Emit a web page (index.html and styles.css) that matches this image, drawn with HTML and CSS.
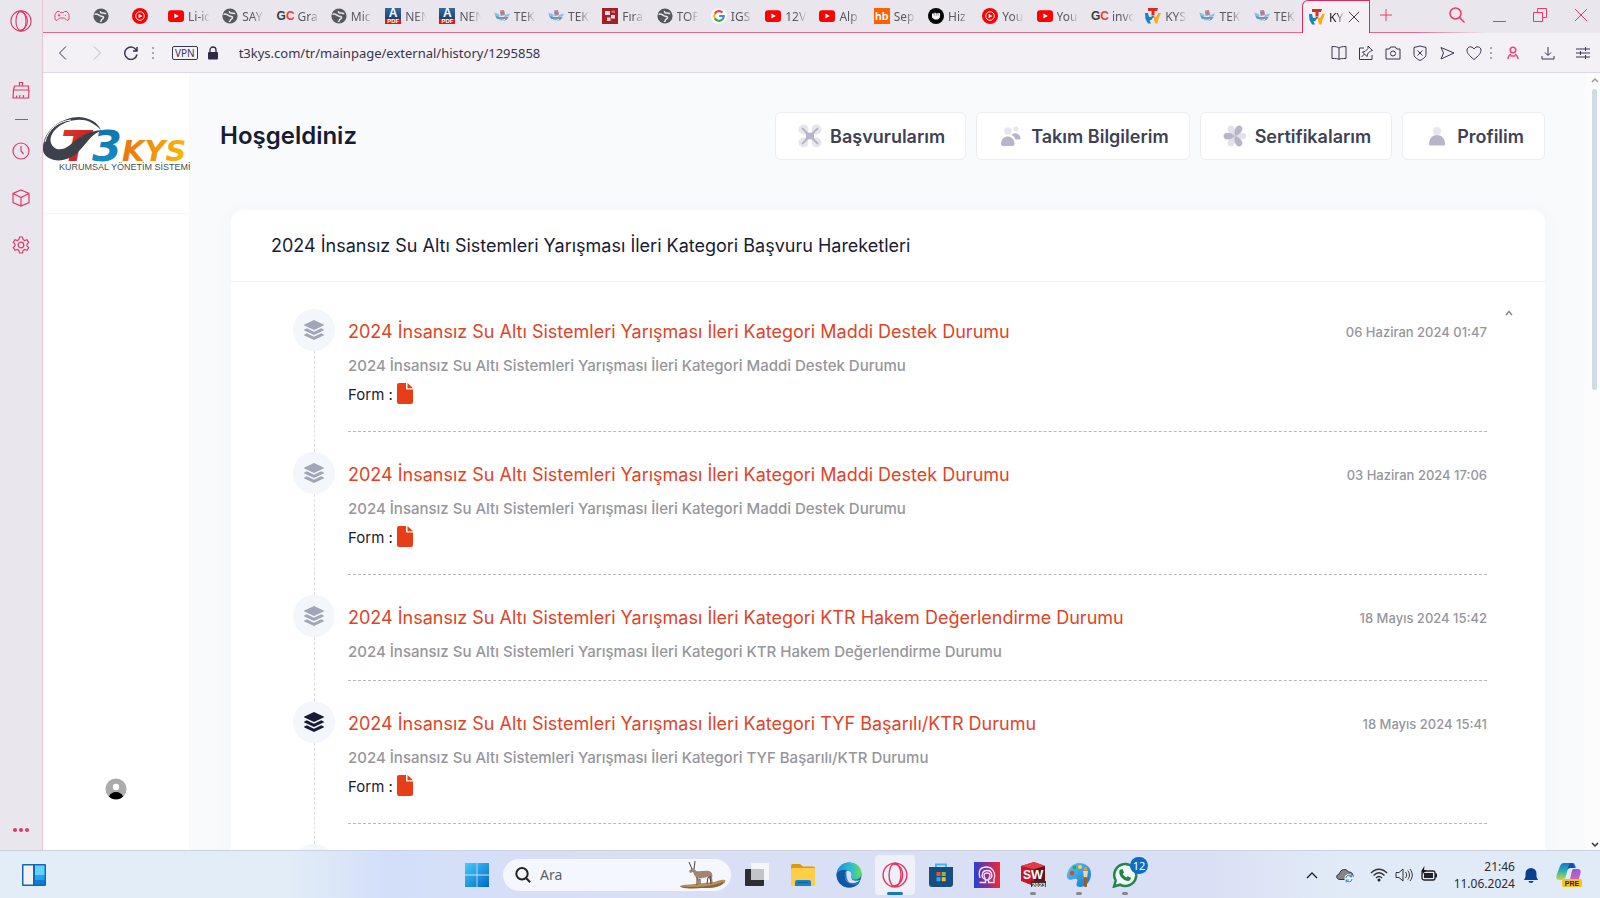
FILE: index.html
```html
<!DOCTYPE html>
<html lang="tr">
<head>
<meta charset="utf-8">
<meta name="viewport" content="width=device-width, initial-scale=1">
<title>KYS</title>
<link rel="stylesheet" href="styles.css">
</head>
<body>
<svg class="sprite" aria-hidden="true">
  <defs>
    <linearGradient id="g-red" x1="0" y1="0" x2="1" y2="1"><stop offset="0" stop-color="#e2382a"/><stop offset="1" stop-color="#b51a20"/></linearGradient>
    <linearGradient id="g-blue" x1="0" y1="0" x2="0" y2="1"><stop offset="0" stop-color="#0a6fae"/><stop offset="1" stop-color="#1593c9"/></linearGradient>
    <linearGradient id="g-kys" x1="0" y1="0" x2="1" y2="0"><stop offset="0" stop-color="#e87510"/><stop offset="1" stop-color="#f9b90c"/></linearGradient>
    <linearGradient id="g-win" x1="0" y1="0" x2="1" y2="1"><stop offset="0" stop-color="#46cdf8"/><stop offset="1" stop-color="#0067c8"/></linearGradient>
    <linearGradient id="g-edge" x1="0" y1="0" x2="1" y2="0"><stop offset="0" stop-color="#1b8fdb"/><stop offset=".6" stop-color="#2cc0cf"/><stop offset="1" stop-color="#69dc58"/></linearGradient>
    <linearGradient id="g-app" x1="0" y1="0" x2="1" y2="0"><stop offset="0" stop-color="#2a3ed0"/><stop offset=".5" stop-color="#8b2f93"/><stop offset="1" stop-color="#f5282f"/></linearGradient>
    <linearGradient id="g-paint" x1="0" y1="0" x2="1" y2="1"><stop offset="0" stop-color="#5ccbf5"/><stop offset="1" stop-color="#1673c4"/></linearGradient>
    <linearGradient id="g-cop1" x1="0" y1="0" x2="0" y2="1"><stop offset="0" stop-color="#1576d8"/><stop offset=".5" stop-color="#2cb7a5"/><stop offset="1" stop-color="#d7d23a"/></linearGradient>
    <linearGradient id="g-cop2" x1="0" y1="0" x2="0" y2="1"><stop offset="0" stop-color="#8f5be8"/><stop offset="1" stop-color="#f0609a"/></linearGradient>
  </defs>
  <symbol id="globe" viewBox="0 0 16 16"><circle cx="8" cy="8" r="7.6" fill="#55585c"/><path d="M1.500 6.500C4 4.500 5.500 7.500 7.500 8c2 .4 3.200.2 3 1.700-.2 1.300-2 1-2.200 2.800-.1 1-.8 1-1.300.6M7.500 3c-.4 1.800 1 2.300 2.300 2 1.200-.2 1.700.8 3.500.6" fill="none" stroke="#e9e6ee" stroke-width="1.500"/></symbol>
  <symbol id="ytm" viewBox="0 0 16 16"><circle cx="8" cy="8" r="8" fill="#f00"/><circle cx="8" cy="8" r="4.300" fill="none" stroke="#fff"/><path d="M6.600 5.700 10.400 8l-3.800 2.300z" fill="#fff"/></symbol>
  <symbol id="yt" viewBox="0 0 16 16"><rect y="2.300" width="16" height="11.600" rx="3" fill="#f00"/><path d="M6.400 5.500 10.800 8l-4.400 2.500z" fill="#fff"/></symbol>
  <symbol id="tek" viewBox="0 0 16 16"><path d="M1 6.500c2 .5 3 1 4 2.500h9.500c-1 3.500-5 4.500-8.500 3.500C3 11.500 1.500 9.500 1 6.500z" fill="#5aa9d6"/><path d="M0 4.500 4.500 6 6 8.500 2 8zM16 5.500 11 7 10 9l4.500-.5z" fill="#86bfe0"/><path d="M6 2.500 10 2l1 5-4.500 1z" fill="#a08ea6"/><path d="M2.500 9.500 13 10M6.500 5h4" stroke="#e2655c" stroke-width="1.200"/><path d="M4 11.500c2 1 5 1 7 0" stroke="#eef5fa" fill="none"/></symbol>
  <symbol id="fira" viewBox="0 0 16 16"><rect width="16" height="16" fill="#a52026"/><path d="M3 3h5v4H3zM9 7h4v3.500H9zM5 9.500h3.500V13H5z" fill="#f5dedd"/><path d="M9.500 2.500H13V5H9.500z" fill="#cf6a6c"/></symbol>
  <symbol id="google" viewBox="0 0 16 16"><circle cx="8" cy="8" r="8" fill="#fff"/><g fill="none" stroke-width="2.200"><path d="M11.500 4.600A4.800 4.800 0 0 0 3.900 5.600" stroke="#ea4335"/><path d="M3.900 5.600a4.800 4.800 0 0 0 0 4.800" stroke="#fbbc05"/><path d="M3.900 10.400a4.800 4.800 0 0 0 7.300 1.200" stroke="#34a853"/><path d="M11.200 11.600C12.400 10.600 12.900 9.500 12.800 8H8.200" stroke="#4285f4"/></g></symbol>
  <symbol id="fist" viewBox="0 0 16 16"><circle cx="8" cy="8" r="8" fill="#050505"/><path d="M4 5.500h2l.4-.7h1.400l.5.500h1.400l.4-.3h1.500l.5 1-.2 3.500-2 2H6.500L4 9.500z" fill="#f2f2f2"/><path d="M6.300 5v2.700M8.300 5v2.700M10.200 5v2.700" stroke="#444" stroke-width=".5"/></symbol>
  <symbol id="kys" viewBox="0 0 16 16"><path d="M3 0h10l-1 3h-2.500v4.500h-3V3H3z" fill="#d92b22"/><path d="M0 5h3l1 4 4-.5-1 3-2.500 1 1.500 3H3L.5 11z" fill="#1685bd"/><path d="M16 5h-2.500l-2.500 4-2-.3v3l1.300 3.800h2.200l.5-3.500z" fill="#f7ad16"/><path d="M6.500 8 9.500 8.500 8 10z" fill="#4b4650"/></symbol>
  <symbol id="pad" viewBox="0 0 16 16"><path d="M3 3.500h2.500l1 1h3l1-1H13l2 3v5l-2 1-2.500-2.500h-5L3 12.500l-2-1v-5z"/><path d="M5 6v2.500M3.800 7.300h2.500M11 7.300h1M9.500 7.300h.3"/></symbol>
  <symbol id="opera" viewBox="0 0 24 24"><circle cx="12" cy="12" r="11"/><ellipse cx="12" cy="12" rx="5.500" ry="10.800"/><path d="M9 2C15 1 19 6 19 12S15 23 9 22"/></symbol>
  <symbol id="brush" viewBox="0 0 18 18"><path d="M7.500 5V1.500h3V5M2.500 5h14v4H1.500zM1.500 9 1 17h15.500L17 9M7.500 17l.5-3M11.500 17v-3M4 17l1-2.500"/></symbol>
  <symbol id="clock" viewBox="0 0 18 18"><circle cx="9" cy="9" r="8"/><path d="M9 4v5l2.500 3"/></symbol>
  <symbol id="cube" viewBox="0 0 18 18"><path d="M9 1l8 3.500v9L9 17l-8-3.500v-9zM1 4.500 9 8.500l8-4M9 8.500V17"/></symbol>
  <symbol id="gear" viewBox="0 0 18 18"><circle cx="9" cy="9" r="2.800"/><path d="M7 3.500 7.500 1h3l.5 2.500 1.500 1L15 3.700l1.700 2.700L15 8.200v1.600l1.700 1.800L15 14.300l-2.500-.8-1.500 1-.5 2.500h-3L7 14.500l-1.500-1-2.500.8-1.700-2.700L3 9.800V8.200L1.300 6.400 3 3.700l2.500.8z"/></symbol>
  <symbol id="x" viewBox="0 0 14 14"><path d="M1 1l12 12M13 1 1 13"/></symbol>
  <symbol id="layers" viewBox="0 0 20 20"><path d="M10 0l9.600 4.600c.5.300.5.700 0 1L10 10 .4 5.600c-.5-.3-.5-.7 0-1z"/><path d="M2.800 8.300.4 9.500c-.5.300-.5.700 0 1L10 15l9.600-4.500c.5-.3.5-.7 0-1l-2.400-1.200L10 11.700z"/><path d="M2.800 13.300.4 14.500c-.5.300-.5.700 0 1L10 20l9.600-4.500c.5-.3.500-.7 0-1l-2.400-1.200-7.200 3.400z"/></symbol>
  <symbol id="doc" viewBox="0 0 16 21"><path d="M2 0h7v5.500c0 .6.400 1 1 1h6V19a2 2 0 0 1-2 2H2a2 2 0 0 1-2-2V2a2 2 0 0 1 2-2z"/><path d="M10.500 0 16 5.200h-5.500z"/></symbol>
</svg>

<div class="desktop">
  <div class="browser">
    <aside class="dock">
      <button class="ico-btn dock-opera" aria-label="Opera"><svg class="i22 line"><use href="#opera"/></svg></button>
      <div class="dock-list">
        <button class="ico-btn" aria-label="Temizle"><svg class="i18 line"><use href="#brush"/></svg></button>
        <span class="dock-rule"></span>
        <button class="ico-btn" aria-label="Geçmiş"><svg class="i18 line"><use href="#clock"/></svg></button>
        <button class="ico-btn" aria-label="Uzantılar"><svg class="i18 line"><use href="#cube"/></svg></button>
        <button class="ico-btn" aria-label="Ayarlar"><svg class="i18 line"><use href="#gear"/></svg></button>
      </div>
      <button class="ico-btn dock-more" aria-label="Diğer"><svg class="i18" viewBox="0 0 18 18"><circle cx="3" cy="9" r="2"/><circle cx="9" cy="9" r="2"/><circle cx="15" cy="9" r="2"/></svg></button>
    </aside>

    <div class="window">
      <div class="tabbar">
        <div class="pins">
          <button class="ico-btn pink" aria-label="GX"><svg class="i16 line"><use href="#pad"/></svg></button>
          <button class="ico-btn" aria-label="Site"><svg class="i16"><use href="#globe"/></svg></button>
          <button class="ico-btn" aria-label="YouTube Music"><svg class="i16"><use href="#ytm"/></svg></button>
        </div>
        <nav class="tabs">
          <button class="tab"><svg class="i16"><use href="#yt"/></svg><span class="name">Li-ic</span></button>
          <button class="tab"><svg class="i16"><use href="#globe"/></svg><span class="name">SAY</span></button>
          <button class="tab"><b class="gc">G<i>C</i></b><span class="name">Gra</span></button>
          <button class="tab"><svg class="i16"><use href="#globe"/></svg><span class="name">Mic</span></button>
          <button class="tab"><b class="pdf">A<i>PDF</i></b><span class="name">NEN</span></button>
          <button class="tab"><b class="pdf">A<i>PDF</i></b><span class="name">NEN</span></button>
          <button class="tab"><svg class="i16"><use href="#tek"/></svg><span class="name">TEK</span></button>
          <button class="tab"><svg class="i16"><use href="#tek"/></svg><span class="name">TEK</span></button>
          <button class="tab"><svg class="i16"><use href="#fira"/></svg><span class="name">Fıra</span></button>
          <button class="tab"><svg class="i16"><use href="#globe"/></svg><span class="name">TOF</span></button>
          <button class="tab"><svg class="i16"><use href="#google"/></svg><span class="name">IGS</span></button>
          <button class="tab"><svg class="i16"><use href="#yt"/></svg><span class="name">12V</span></button>
          <button class="tab"><svg class="i16"><use href="#yt"/></svg><span class="name">Alp</span></button>
          <button class="tab"><b class="hb">hb</b><span class="name">Sep</span></button>
          <button class="tab"><svg class="i16"><use href="#fist"/></svg><span class="name">Hiz</span></button>
          <button class="tab"><svg class="i16"><use href="#ytm"/></svg><span class="name">You</span></button>
          <button class="tab"><svg class="i16"><use href="#yt"/></svg><span class="name">You</span></button>
          <button class="tab"><b class="gc">G<i>C</i></b><span class="name">invo</span></button>
          <button class="tab"><svg class="i16"><use href="#kys"/></svg><span class="name">KYS</span></button>
          <button class="tab"><svg class="i16"><use href="#tek"/></svg><span class="name">TEK</span></button>
          <button class="tab"><svg class="i16"><use href="#tek"/></svg><span class="name">TEK</span></button>
        </nav>
        <div class="tab-active"><svg class="i16"><use href="#kys"/></svg><span class="name">KY</span><button class="ico-btn" aria-label="Sekmeyi kapat"><svg class="i12 line"><use href="#x"/></svg></button></div>
        <div class="controls">
          <button class="ico-btn" aria-label="Yeni sekme"><svg class="i14 line" viewBox="0 0 14 14"><path d="M7 1v12M1 7h12"/></svg></button>
          <div class="win-controls">
            <button class="ico-btn" aria-label="Ara"><svg class="i16 line mid" viewBox="0 0 16 16"><circle cx="6.500" cy="6.500" r="5.500"/><path d="M10.500 10.500 15.500 15.500"/></svg></button>
            <button class="ico-btn" aria-label="Küçült"><svg class="i14 line" viewBox="0 0 14 14"><path d="M1 13.500h13"/></svg></button>
            <button class="ico-btn" aria-label="Geri yükle"><svg class="i14 line" viewBox="0 0 14 14"><path d="M.5 4.500h9v9h-9zM4.500 4.500v-4h9v9h-4"/></svg></button>
            <button class="ico-btn" aria-label="Kapat"><svg class="i14 line"><use href="#x"/></svg></button>
          </div>
        </div>
      </div>

      <div class="addressbar">
        <div class="nav-btns">
          <button class="ico-btn" aria-label="Geri"><svg class="i14 line" viewBox="0 0 14 14"><path d="M10 .5 3.500 7l6.500 6.500"/></svg></button>
          <button class="ico-btn dim" aria-label="İleri"><svg class="i14 line" viewBox="0 0 14 14"><path d="M4 .5 10.500 7 4 13.500"/></svg></button>
          <button class="ico-btn" aria-label="Yenile"><svg class="i14 line mid" viewBox="0 0 14 14"><path d="M12.500 4.500A6.200 6.200 0 1 0 13 8.500M13 1v4H9"/></svg></button>
        </div>
        <span class="vdots"></span>
        <span class="vpn">VPN</span>
        <svg class="lock" viewBox="0 0 12 14"><rect x="1" y="6" width="10" height="7.500" rx="1" fill="#2f2a44"/><path d="M3 6V4a3 3 0 0 1 6 0v2" fill="none" stroke="#2f2a44" stroke-width="1.300"/></svg>
        <input class="url" type="text" aria-label="Adres" value="t3kys.com/tr/mainpage/external/history/1295858">
        <div class="tools">
          <button class="ico-btn" aria-label="Okuyucu"><svg class="i16 line" viewBox="0 0 16 16"><path d="M8 3C7 2 5 1.500 1 1.500v12c4 0 6 0 7 1 1-1 3-1 7-1v-12c-4 0-6 .5-7 1.500zM8 3v11.500"/></svg></button>
          <button class="ico-btn" aria-label="Sabitle"><svg class="i16 line" viewBox="0 0 16 16"><path d="M6 3H1.500v11.500H14V10M10 1l4.500 4.500-2 .5-3 3-.5 2.500L4.500 7l2.500-.5 3-3zM6.500 9 3.500 12"/></svg></button>
          <button class="ico-btn" aria-label="Anlık görüntü"><svg class="i16 line" viewBox="0 0 16 16"><path d="M1 4h3.500l1-2h5l1 2H15v10H1z"/><circle cx="8" cy="8.500" r="2.500"/></svg></button>
          <button class="ico-btn" aria-label="Engelleyici"><svg class="i16 line" viewBox="0 0 16 16"><path d="M8 1l6 1.500v7c0 2.500-3 4.500-6 6-3-1.500-6-3.500-6-6v-7zM5.500 5.500l5 5M10.500 5.500l-5 5"/></svg></button>
          <button class="ico-btn" aria-label="Gönder"><svg class="i16 line" viewBox="0 0 16 16"><path d="M2 2.500 15 8 2 14l2.500-6z"/></svg></button>
          <button class="ico-btn" aria-label="Favori"><svg class="i16 line" viewBox="0 0 16 16"><path d="M8 14.500C3 10.500 1 8 1 5.200 1 1.500 6 .5 8 4c2-3.500 7-2.500 7 1.200C15 8 13 10.500 8 14.500z"/></svg></button>
        </div>
        <span class="vdots"></span>
        <div class="tools-end">
          <button class="ico-btn pink" aria-label="Profil"><svg class="i14 line mid" viewBox="0 0 14 14"><circle cx="7" cy="4" r="2.800"/><path d="M2 13c0-2.500 1.500-4 3-5M12 13c0-2.500-1.500-4-3-5M4.500 10h5"/></svg></button>
          <button class="ico-btn" aria-label="İndirilenler"><svg class="i14 line" viewBox="0 0 14 14"><path d="M7 1v8M4 6.500 7 9.500l3-3M1 10v3h12v-3"/></svg></button>
          <button class="ico-btn" aria-label="Kolay kurulum"><svg class="i14 line" viewBox="0 0 14 14"><path d="M0 3h14M0 7h14M0 11h14M9.500 1v4M4.500 5v4M9.500 9v4"/></svg></button>
        </div>
      </div>

      <div class="viewport">
        <aside class="site-side">
          <a class="logo" href="#" aria-label="T3 KYS Kurumsal Yönetim Sistemi">
            <svg viewBox="0 0 148 56">
              <text x="18" y="44" class="lg-big" fill="url(#g-red)">T</text>
              <path d="M0 32C0 12 20 0 36 0c12 1 19 6 22 13C50 5 42 2 34 3 18 4 5 16 8 26c3 8 12 8 19 2 9-8 17-14 33-15-12 4-16 13-24 21-8 9-22 12-30 7-5-3-6-6-6-9z" fill="#3d414b"/>
              <path d="M2 25C5 12 16 4 28 3" fill="none" stroke="#fff"/>
              <text x="49" y="44" class="lg-big" fill="url(#g-blue)">3</text>
              <text x="79" y="44" class="lg-kys" fill="url(#g-kys)">KYS</text>
              <text x="16" y="53" class="lg-sub" fill="#4a4d55">KURUMSAL YÖNETİM SİSTEMİ</text>
            </svg>
          </a>
          <button class="ico-btn avatar" aria-label="Hesap"><svg class="i22" viewBox="0 0 22 22"><circle cx="11" cy="11" r="10.500" fill="#ababab"/><path d="M4 18.500C6 12.500 16 12.500 18 18.500 14.500 22.300 7.500 22.300 4 18.500z" fill="#000"/><circle cx="11" cy="9" r="3.200" fill="#fff"/></svg></button>
        </aside>

        <main class="site">
          <header class="site-head">
            <h1>Hoşgeldiniz</h1>
            <nav class="menu">
              <a href="#" class="menu-item"><svg viewBox="0 0 24 24"><g fill="#e7e6ee"><circle cx="5.500" cy="5.500" r="5"/><circle cx="18.500" cy="5.500" r="5"/><circle cx="5.500" cy="18.500" r="5"/><circle cx="18.500" cy="18.500" r="5"/></g><path d="M4 4l16 16M20 4 4 20" stroke="#b7b5c9" stroke-width="2"/><path d="M7 8c3 1 7 1 10 0-1.500 3-1.500 5 0 8-3-1-7-1-10 0 1.500-3 1.500-5 0-8z" fill="#b7b5c9"/></svg>Başvurularım</a>
              <a href="#" class="menu-item"><svg viewBox="0 0 24 24"><circle cx="9" cy="7" r="3.700" fill="#e7e6ee"/><circle cx="17" cy="5" r="2.500" fill="#e7e6ee"/><path d="M2 20c0-10 13.500-10 13.500 0 0 1.300-.6 2-2 2H4c-1.300 0-2-.7-2-2zM12.500 11c3-3.500 9-1 9 3 0 1-.5 1.500-1.500 1.500h-3.500C16 13.500 14.500 12 12.500 11z" fill="#b7b5c9"/></svg>Takım Bilgilerim</a>
              <a href="#" class="menu-item"><svg viewBox="0 0 24 24"><defs><path id="petal" d="M12 12C8 16.500.5 16.500.5 12S8 7.500 12 12z"/></defs><g fill="#e3e2eb"><use href="#petal" transform="rotate(60 12 12)"/><use href="#petal" transform="rotate(180 12 12)"/><use href="#petal" transform="rotate(300 12 12)"/></g><g fill="#b7b5c9"><use href="#petal"/><use href="#petal" transform="rotate(120 12 12)"/><use href="#petal" transform="rotate(240 12 12)"/></g></svg>Sertifikalarım</a>
              <a href="#" class="menu-item"><svg viewBox="0 0 24 24"><circle cx="12" cy="7" r="4" fill="#e7e6ee"/><path d="M4 20c0-12 16-12 16 0 0 1-.5 1.500-1.500 1.500h-13C4.500 21.500 4 21 4 20z" fill="#b7b5c9"/></svg>Profilim</a>
            </nav>
          </header>

          <section class="card">
            <h2 class="card-head">2024 İnsansız Su Altı Sistemleri Yarışması İleri Kategori Başvuru Hareketleri</h2>
            <div class="card-body">
              <ol class="timeline">
                <li class="entry">
                  <span class="badge"><svg><use href="#layers"/></svg></span>
                  <div class="entry-main">
                    <div class="entry-top"><h3>2024 İnsansız Su Altı Sistemleri Yarışması İleri Kategori Maddi Destek Durumu</h3><time>06 Haziran 2024 01:47</time></div>
                    <p class="desc">2024 İnsansız Su Altı Sistemleri Yarışması İleri Kategori Maddi Destek Durumu</p>
                    <p class="form">Form : <a href="#" aria-label="Form dosyası"><svg><use href="#doc"/></svg></a></p>
                  </div>
                </li>
                <li class="entry">
                  <span class="badge"><svg><use href="#layers"/></svg></span>
                  <div class="entry-main">
                    <div class="entry-top"><h3>2024 İnsansız Su Altı Sistemleri Yarışması İleri Kategori Maddi Destek Durumu</h3><time>03 Haziran 2024 17:06</time></div>
                    <p class="desc">2024 İnsansız Su Altı Sistemleri Yarışması İleri Kategori Maddi Destek Durumu</p>
                    <p class="form">Form : <a href="#" aria-label="Form dosyası"><svg><use href="#doc"/></svg></a></p>
                  </div>
                </li>
                <li class="entry">
                  <span class="badge"><svg><use href="#layers"/></svg></span>
                  <div class="entry-main">
                    <div class="entry-top"><h3>2024 İnsansız Su Altı Sistemleri Yarışması İleri Kategori KTR Hakem Değerlendirme Durumu</h3><time>18 Mayıs 2024 15:42</time></div>
                    <p class="desc">2024 İnsansız Su Altı Sistemleri Yarışması İleri Kategori KTR Hakem Değerlendirme Durumu</p>
                  </div>
                </li>
                <li class="entry">
                  <span class="badge dark"><svg><use href="#layers"/></svg></span>
                  <div class="entry-main">
                    <div class="entry-top"><h3>2024 İnsansız Su Altı Sistemleri Yarışması İleri Kategori TYF Başarılı/KTR Durumu</h3><time>18 Mayıs 2024 15:41</time></div>
                    <p class="desc">2024 İnsansız Su Altı Sistemleri Yarışması İleri Kategori TYF Başarılı/KTR Durumu</p>
                    <p class="form">Form : <a href="#" aria-label="Form dosyası"><svg><use href="#doc"/></svg></a></p>
                  </div>
                </li>
                <li class="entry"><span class="badge"></span></li>
              </ol>
              <button class="ico-btn list-up" aria-label="Yukarı"><svg viewBox="0 0 8 6"><path d="M1 5l3-3.500L7 5"/></svg></button>
            </div>
          </section>
        </main>

        <div class="scroll">
          <svg viewBox="0 0 8 6"><path d="M1 5l3-3 3 3" stroke="#999"/></svg>
          <span class="thumb"></span>
          <svg class="down" viewBox="0 0 8 6"><path d="M1 1l3 3 3-3" stroke="#333"/></svg>
        </div>
      </div>
    </div>
  </div>

  <footer class="taskbar">
    <div class="tb-left">
      <button class="ico-btn" aria-label="Pencere öğeleri"><svg class="i26" viewBox="0 0 26 26"><rect x="1" y="2" width="24" height="22" rx="1" fill="#1567ae"/><rect x="2.500" y="3.500" width="9.500" height="19" fill="#f1f2f4"/><rect x="14" y="3.500" width="9.500" height="19" fill="#0b7fd6"/><rect x="14" y="3.500" width="9.500" height="10" fill="#63d2fb"/><rect x="14" y="13.500" width="9.500" height="4.500" fill="#21a3ee"/></svg></button>
    </div>
    <div class="tb-mid">
      <button class="ico-btn" aria-label="Başlat"><svg class="i26" viewBox="0 0 26 26"><path d="M1 1h11.600v11.600H1zM13.400 1H25v11.600H13.400zM1 13.400h11.600V25H1zM13.400 13.400H25V25H13.400z" fill="url(#g-win)"/></svg></button>
      <label class="search">
        <svg class="i16" viewBox="0 0 16 16"><circle cx="7" cy="6.700" r="5.700"/><path d="M11 11l4.200 4.200"/></svg>
        <input type="text" placeholder="Ara" aria-label="Ara">
        <svg class="oryx" viewBox="0 0 48 28"><path d="M1 25c4-2 10-1 14-2 8-1 14-1 20-2 4-1 8-3 11-2 1 1 0 3-2 4-4 4-14 4-22 4-8 1-19 1-21-2z" fill="#b3905c"/><path d="M1 25c9 2 22 1 34-1 4-1 8-3 10-3-3 5-12 6-21 6S3 28 1 25z" fill="#86643a"/><path d="M12 8c2-1 4 0 5 2 4 1 9-1 13 0 3 1 4 4 3 7l1 6h-1l-3-6-9 0-1 6h-1l-1-6c-3-2-3-4-4-6l-3 1-1-2z" fill="#a18472"/><path d="M13 8 10 1M15 8l1-8M18 16v8M21 16v7M31 15l1 8M29 16l-1 7" stroke="#51413b" fill="none"/><path d="M19 17c4 1 7 0 10-1" stroke="#eee1d4" fill="none"/></svg>
      </label>
      <button class="ico-btn" aria-label="Görev görünümü"><svg class="i26" viewBox="0 0 26 26"><rect x="1" y="7" width="19" height="17" rx="1" fill="#2d2e31"/><rect x="7" y="1" width="18" height="17" rx="1" fill="#f6f6f8"/><rect x="7" y="7" width="13" height="11" fill="#c3c4c8"/></svg></button>
      <button class="ico-btn" aria-label="Dosya Gezgini"><svg class="i26" viewBox="0 0 26 26"><path d="M1 4a2 2 0 0 1 2-2h7l3 2.500h10a2 2 0 0 1 2 2V10H1z" fill="#dc9a10"/><rect x="1" y="6" width="24" height="18" rx="1.500" fill="#ffce47"/><path d="M5 24v-4a2 2 0 0 1 2-2h12a2 2 0 0 1 2 2v4z" fill="#1a80cc"/><path d="M8 20.500h10" stroke="#0a5b9c"/></svg></button>
      <button class="ico-btn" aria-label="Edge"><svg class="i26" viewBox="0 0 26 26"><circle cx="13" cy="13" r="12.500" fill="#1269bb"/><path d="M.6 12C2 4 8 .5 13.500.5c7 0 12 5 12 10.500 0 5-4 7-8 6.500-2 0-3-1-2.500-2.500 2-4-1-7-4.500-7C6 8 2 9 .6 12z" fill="url(#g-edge)"/><path d="M10.500 9C8 12 8 19 13 22c4 2 8 1 10.500-2-2 4-6 5.500-10.500 5.500C5 25.500.5 19 .6 12 3 8 8 7 10.500 9z" fill="#0e58a6"/><path d="M15 15c2-4-1.500-7-4.500-6-3 3-2 11 4 12 4 .6 8-1 9.500-3-3 1.500-9 1-9-3z" fill="#d9dff4"/><path d="M10.500 9C7 13 9 19.500 14.500 21c3.500 1 7 .2 9.500-2-1 2-2 3-3 4-6 1-12-4-10.500-14z" fill="#1874c7"/></svg></button>
      <button class="ico-btn on" aria-label="Opera"><svg class="i26 line rose"><use href="#opera"/></svg></button>
      <button class="ico-btn" aria-label="Store"><svg class="i26" viewBox="0 0 26 26"><path d="M8 7V2.500h10V7" fill="none" stroke="#3dbdf2" stroke-width="2"/><path d="M1 5h24v17a3 3 0 0 1-3 3H4a3 3 0 0 1-3-3z" fill="#164d82"/><path d="M8.500 10h4v4h-4z" fill="#f1502f"/><path d="M13.700 10h4v4h-4z" fill="#80c041"/><path d="M8.500 15.200h4v4h-4z" fill="#2ca8ec"/><path d="M13.700 15.200h4v4h-4z" fill="#fdbb16"/></svg></button>
      <button class="ico-btn" aria-label="Uygulama"><svg class="i26" viewBox="0 0 26 26"><rect width="26" height="26" fill="url(#g-app)"/><g fill="none" stroke="#f4e6f5" stroke-width="1.300"><path d="M5.500 20.500h6v-3c-3-1-4-3-3-6 1-4 8-4 9 0 1 3 0 5-3 6v3h5.500v-3c2-6-1-12.500-7.500-12.500S4 9 6 16"/><path d="M11 16c-2-3-1-5 2-5s4 2 2 5l-.5 2h-3z"/></g></svg></button>
      <button class="ico-btn run" aria-label="SolidWorks"><svg class="i26" viewBox="0 0 26 26"><path d="M1 4 14 0l11 4v15l-11 5-13-5z" fill="#c91623"/><path d="M14 7 25 4v15l-11 5z" fill="#65111a"/><path d="M1 4 14 0l11 4-11 3z" fill="#e23d44"/><text x="3" y="17" class="ico-sw" fill="#fff">S<tspan class="ico-w">W</tspan></text><rect x="11" y="19" width="15" height="6" fill="#333"/><text x="12" y="25" class="ico-yr" fill="#fff">2023</text></svg></button>
      <button class="ico-btn run" aria-label="Paint"><svg class="i26" viewBox="0 0 26 26"><path d="M13 1c7 0 12 4 12 11s-5 13-11 13c-4 0-4-3-3-5s0-4-3-3c-5 2-7.500 0-7-4C2 6 7 1 13 1z" fill="url(#g-paint)"/><circle cx="6" cy="11" r="2.200" fill="#d24b2c"/><circle cx="8.500" cy="5.500" r="2" fill="#45a254"/><circle cx="14" cy="5" r="2" fill="#ffd23e"/><circle cx="19.500" cy="7" r="2" fill="#e9922f"/><path d="M17 9h5l-1 7h-3z" fill="#ecd6aa"/><rect x="18" y="15" width="3" height="10" rx="1" fill="#8b6136"/></svg></button>
      <button class="ico-btn run wa" aria-label="WhatsApp"><svg class="i26" viewBox="0 0 26 26"><path d="M2 24.500 3.700 18.500A11 11 0 1 1 8 22.700z" fill="#f3faf6" stroke="#22854c" stroke-width="2.500"/><path d="M8.500 7.500 10.500 7l1.500 3.500-1.200 1.500c.8 1.600 2 2.700 3.700 3.500l1.300-1.300 3.200 1.500c0 2-1.500 3.300-3.500 3.200-4-.4-8-4.400-8.300-8.400 0-1.200.4-2.300 1.300-3z" fill="#22854c"/></svg><span class="count">12</span></button>
    </div>
    <div class="tb-right">
      <button class="ico-btn" aria-label="Gizli simgeler"><svg class="i12" viewBox="0 0 12 12"><path d="M1 9l5-5 5 5" fill="none" stroke="#222" stroke-width="1.300"/></svg></button>
      <svg class="i18" viewBox="0 0 18 18"><path d="M4 13.500C0 13.500-.5 8.500 3.500 8 4 3 10.500 2 12.500 6c3-.3 4.500 1.800 4.500 4 0 2-1.500 3.500-3.500 3.500z" fill="#858585" stroke="#333"/><circle cx="13" cy="12.500" r="4.500" fill="#e8f2fa"/><path d="M10 12a3 3 0 0 1 5.500-1.500M16 13a3 3 0 0 1-5.500 1.500M15.800 8.500v2.300h-2.300M10.200 16.300V14h2.300" fill="none" stroke="#2177cf"/></svg>
      <div class="status">
        <svg class="i18" viewBox="0 0 18 18"><g fill="none" stroke="#333" stroke-width="1.300"><path d="M1 7c5-5 11-5 16 0M3.500 9.500c3.500-3.500 7.500-3.500 11 0M6 12c2-2 4-2 6 0"/></g><circle cx="9" cy="14" r="1.500" fill="#222"/></svg>
        <svg class="i18" viewBox="0 0 18 18"><path d="M1 6.500h3l4-3.500v12l-4-3.500H1zM10.500 6c1.500 2 1.500 4 0 6M12.800 4.500c2.200 3 2.200 6 0 9M15 3c3 4 3 8 0 12" fill="none" stroke="#333"/></svg>
        <svg class="i18" viewBox="0 0 18 18"><rect x="2" y="5" width="13" height="9" rx="2" fill="none" stroke="#222" stroke-width="1.300"/><rect x="4" y="7" width="9" height="5" fill="#222"/><path d="M16 7.500v4" stroke="#222" stroke-width="2"/><path d="M4.500 0 1 5.500h2.500L2 9l4.500-5H4z" fill="#111"/></svg>
      </div>
      <div class="clock"><time>21:46</time><time>11.06.2024</time></div>
      <svg class="i16" viewBox="0 0 16 16"><path d="M1 13 2.500 10V6.500a5.500 5.500 0 0 1 11 0V10L15 13zM5.500 14h5a2.500 2 0 0 1-5 0z" fill="#0b3f8f"/></svg>
      <button class="ico-btn" aria-label="Copilot"><svg class="i26" viewBox="0 0 26 26"><path d="M8 1h8c3 0 3 2 4 5h-5c-3 0-3.500 2-4.500 6-1 4-2 6-5 6H3c-3 0-3-3-2-6l3-8c1-2 2-3 4-3z" fill="url(#g-cop1)"/><path d="M14 1c3 0 4 1 5 5h-5c-2 0-3 1-3.500 3z" fill="#174fa8"/><path d="M17 7h5c3 0 3 3 2 6-1 4-2 7-4 8h-9c3-1 3-4 4-8 .5-3 1-5 2-6z" fill="url(#g-cop2)"/><rect x="6" y="17" width="20" height="8" rx="2" fill="#f8c312"/><text x="16" y="23.500" text-anchor="middle" class="ico-pre" fill="#222">PRE</text></svg></button>
    </div>
  </footer>
</div>
</body>
</html>
```
FILE: styles.css
```css
* { box-sizing: border-box; }
body { margin: 0; font-family: Inter, "Open Sans", sans-serif; color: #181c32; overflow: hidden; }
h1, h2, h3, p, ol { margin: 0; padding: 0; font-weight: 500; }
ol { list-style: none; }
a { color: inherit; text-decoration: none; }
button, input { font: inherit; color: inherit; background: none; border: 0; padding: 0; outline: 0; }
svg { display: block; flex: none; }
.sprite { position: absolute; width: 0; height: 0; }
.ico-btn { display: flex; align-items: center; justify-content: center; flex: none; }
.line { fill: none; stroke: currentColor; stroke-width: 1; }
.mid { stroke-width: 1.5; }
.i12 { width: 12px; height: 12px; }
.i14 { width: 14px; height: 14px; }
.i16 { width: 16px; height: 16px; }
.i18 { width: 18px; height: 18px; }
.i22 { width: 22px; height: 22px; }
.i26 { width: 26px; height: 26px; }
.pink { color: #f2446f; }

.desktop { display: flex; flex-direction: column; height: 100vh; }
.browser { display: flex; flex: 1; min-height: 0; background: #e9e6ee; }

/* browser dock */
.dock { width: 43px; flex: none; display: flex; flex-direction: column; align-items: center; padding: 10px 0 11px; color: #e03a64; border-right: 1px solid #f0c5d2; }
.dock .line { stroke-width: 1.2; }
.dock-opera { height: 22px; }
.dock-list { display: flex; flex-direction: column; align-items: center; flex: 1; padding-top: 49px; gap: 29px; }
.dock-rule { width: 13px; height: 1px; background: #e03a64; margin: -9px 0 -7px; }
.dock-more { fill: #e03a64; }

.window { flex: 1; min-width: 0; display: flex; flex-direction: column; }

/* tabs */
.tabbar { display: flex; height: 33px; font-family: "Noto Sans", sans-serif; font-size: 12px; color: #5a5862; }
.pins { display: flex; align-items: center; gap: 23px; padding: 0 20px 0 11px; border-bottom: 1px solid #e06a8b; }
.tabs { flex: 1; min-width: 0; display: grid; grid-template-columns: repeat(20, 54fr) 48fr; border-bottom: 1px solid #e06a8b; }
.tab { display: flex; align-items: center; gap: 4px; min-width: 0; text-align: left; }
.name { width: 22px; overflow: hidden; white-space: nowrap; mask-image: linear-gradient(90deg, #000 50%, transparent); }
.tab-active { display: flex; align-items: center; gap: 4px; width: 68px; padding-left: 6px; background: #f4f0f6; border: 1px solid #d92c5a; border-bottom: 0; border-radius: 6px 0 0 0; color: #222; }
.tab-active .name { width: 15px; }
.controls { flex: none; width: 230px; display: flex; align-items: center; justify-content: space-between; padding: 0 12px 3px 9px; color: #e93a66; border-bottom: 1px solid transparent; border-image: linear-gradient(90deg, #e06a8b 20%, #e9e6ee 50%) 1; }
.win-controls { display: flex; gap: 27px; }
.gc, .hb, .pdf { flex: none; font-family: "Liberation Sans", sans-serif; font-weight: 700; }
.gc i, .pdf i { font-style: normal; }
.gc { width: 17px; font-size: 12px; color: #3c3c40; }
.gc i { color: #ee3d36; }
.hb { width: 16px; height: 16px; background: #ff6000; color: #fff; font-size: 11px; line-height: 16px; text-align: center; }
.pdf { display: flex; flex-direction: column; width: 16px; height: 16px; background: linear-gradient(#35699f, #142f5c); color: #fff; font-size: 12px; line-height: 11px; text-align: center; }
.pdf i { background: #e5141c; font-size: 6px; line-height: 5px; }

/* address bar */
.addressbar { display: flex; align-items: center; height: 40px; padding: 0 10px 0 13px; background: #f3f0f6; border-bottom: 1px solid #dcd9e2; color: #39344e; font-family: "Noto Sans", sans-serif; font-size: 13px; }
.nav-btns { display: flex; gap: 20px; }
.dim { color: #b9b5c2; }
.vdots { width: 2px; height: 12px; margin: 0 0 0 14px; background: repeating-linear-gradient(#a9a5b3 0 2px, transparent 2px 5px); }
.vpn { margin: 0 9px 0 18px; padding: 0 2px; border: 1px solid #39344e; border-radius: 2px; font-size: 10px; line-height: 12px; }
.lock { width: 12px; height: 14px; }
.url { flex: 1; min-width: 0; margin-left: 20px; height: 24px; }
.tools { display: flex; gap: 11px; }
.tools + .vdots { margin-left: 8px; }
.tools-end { display: flex; gap: 21px; margin-left: 14px; }

/* page */
.viewport { flex: 1; min-height: 0; display: flex; background: #f9fafc; overflow: hidden; }
.site-side { width: 146px; flex: none; display: flex; flex-direction: column; justify-content: space-between; align-items: center; background: #fff; padding-bottom: 50px; }
.logo { display: block; width: 100%; height: 141px; padding-top: 44px; border-bottom: 1px solid #f4f5f7; }
.logo svg { width: 148px; height: 56px; overflow: visible; }
.lg-big { font: italic 900 43px "DejaVu Sans", sans-serif; }
.lg-kys { font: italic 900 29px "DejaVu Sans", sans-serif; }
.lg-sub { font: 400 9px "Liberation Sans", sans-serif; }

.site { flex: 1; min-width: 0; padding: 39px 41px 0 31px; }
.site-head { display: flex; align-items: center; justify-content: space-between; height: 48px; }
.site-head h1 { font-size: 24px; font-weight: 600; line-height: 32px; }
.menu { display: flex; align-items: center; gap: 10px; }
.menu-item { display: flex; align-items: center; gap: 8px; height: 48px; padding: 0 20px 0 22px; background: #fff; border: 1px solid #ebedf1; border-radius: 6px; font-size: 18px; font-weight: 600; color: #3f4254; }
.menu-item svg { width: 24px; height: 24px; }

.card { margin: 50px 0 0 11px; background: #fff; border-radius: 12px; box-shadow: 0 0 20px rgba(76, 87, 125, .03); }
.card-head { padding: 0 40px; font-size: 18px; font-weight: 400; line-height: 71px; border-bottom: 1px solid #eff0f4; white-space: nowrap; }
.card-body { display: flex; align-items: flex-start; padding: 27px 30px 0 62px; }
.timeline { flex: 1; min-width: 0; }
.entry { position: relative; display: flex; gap: 13px; padding-bottom: 20px; }
.entry::before { content: ""; position: absolute; left: 21px; top: 42px; bottom: 0; border-left: 1px dashed #dcdde6; }
.badge { flex: none; width: 42px; height: 42px; border-radius: 50%; background: #f3f6fa; display: grid; place-items: center; fill: #a1a5b7; }
.badge svg { width: 20px; height: 20px; }
.dark { fill: #181c32; }
.entry-main { flex: 1; min-width: 0; padding: 9px 0 16px; border-bottom: 1px dashed #b8b8bc; }
.entry-top { display: flex; justify-content: space-between; align-items: center; line-height: 28px; }
.entry h3 { font-size: 18px; font-weight: 400; color: #df4328; white-space: nowrap; }
.entry time { font-size: 13px; color: #96969c; white-space: nowrap; }
.desc { margin-top: 8px; font-size: 15px; line-height: 24px; color: #96969c; }
.form { display: flex; align-items: center; gap: 4px; margin: 5px 0 8px; font-size: 15px; font-weight: 400; line-height: 24px; }
.form svg { width: 16px; height: 21px; margin-bottom: 3px; fill: #e83e18; }
.list-up { width: 12px; margin-left: 16px; padding-top: 1px; }
.list-up svg { width: 8px; height: 6px; fill: none; stroke: #888; stroke-width: 1.5; }

.scroll { width: 14px; flex: none; display: flex; flex-direction: column; align-items: center; padding: 4px 0 2px 3px; background: #fcfcfd; }
.scroll svg { width: 8px; height: 6px; fill: none; stroke-width: 1.5; }
.thumb { width: 5px; height: 39%; margin-top: 6px; background: #cfdbe5; border-radius: 3px; }
.scroll .down { margin-top: auto; }

/* taskbar */
.taskbar { height: 48px; flex: none; display: grid; grid-template-columns: 1fr auto 1fr; align-items: center; border-top: 1px solid #cbd2de; background: linear-gradient(90deg, #e3edf7 0 18%, #d3dff9 24%, #d9dff5 40%, #d9dff4 75%, #e1ebf7 84%); font-family: "Noto Sans", sans-serif; }
.tb-left { display: flex; padding-left: 21px; }
.tb-mid { display: flex; align-items: center; gap: 6px; height: 47px; padding-left: 2px; }
.tb-mid .ico-btn { position: relative; width: 40px; height: 40px; border-radius: 4px; }
.search { display: flex; align-items: center; width: 228px; height: 32px; padding: 0 4px 0 12px; border-radius: 16px; background: #f4f7fd; font-size: 14px; color: #5d5f66; }
.search .i16 { fill: none; stroke: #222; stroke-width: 2; }
.search input { flex: 1; min-width: 0; margin-left: 9px; }
.search input::placeholder { color: #5d5f66; opacity: 1; }
.oryx { width: 48px; height: 28px; }
.tb-mid .on { background: #eff1fa; }
.rose { color: #e6365f; stroke-width: 1.3; }
.on::after, .run::after { content: ""; position: absolute; bottom: 0; width: 16px; height: 3px; border-radius: 2px; background: #1a75c4; }
.run::after { width: 6px; background: #85888f; }
.count { position: absolute; top: 2px; right: -3px; width: 18px; height: 17px; border-radius: 9px; background: #0a6ec4; color: #fff; font-size: 11px; line-height: 17px; text-align: center; }
.tb-right { display: flex; align-items: center; justify-content: flex-end; padding-right: 18px; }
.tb-right > .i18 { margin: 0 16px 0 18px; }
.status { display: flex; gap: 7px; }
.clock { display: flex; flex-direction: column; align-items: flex-end; margin: 0 8px 0 16px; font-size: 12px; line-height: 17px; color: #2b2c31; }
.tb-right > .ico-btn:last-child { margin-left: 17px; }

/* text inside icons */
.ico-sw { font: 700 12px "Liberation Sans", sans-serif; }
.ico-w { font-size: 13px; }
.ico-yr { font: 700 6px "Liberation Sans", sans-serif; }
.ico-pre { font: 700 7px "Liberation Sans", sans-serif; }
```
